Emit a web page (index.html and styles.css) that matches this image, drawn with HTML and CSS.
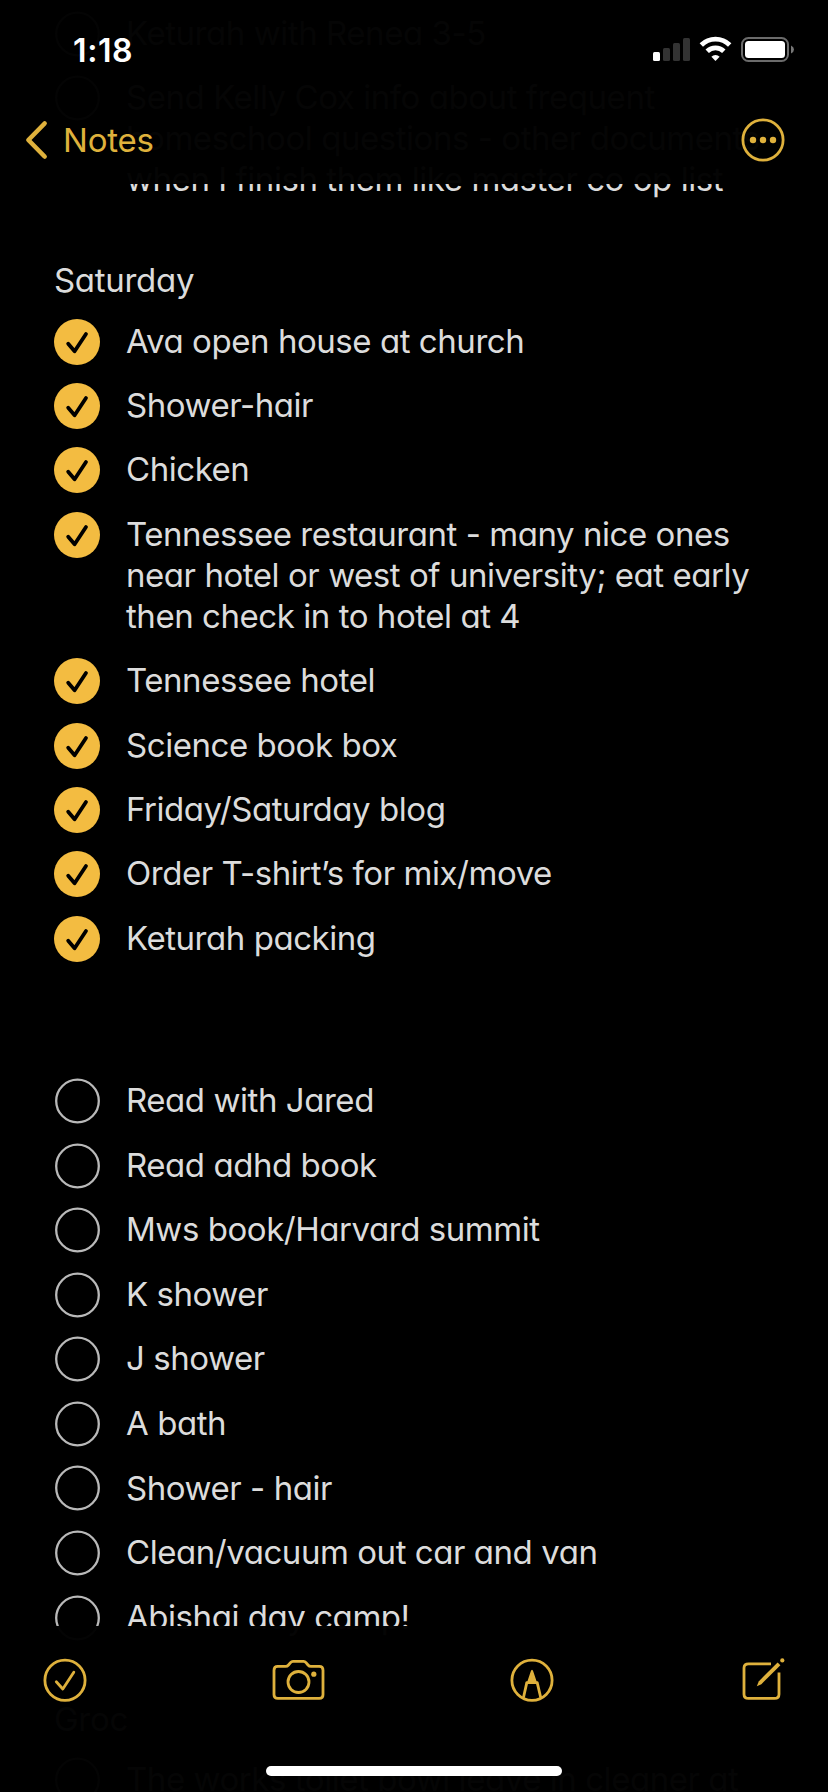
FILE: index.html
```html
<!DOCTYPE html>
<html lang="en">
<head>
<meta charset="utf-8">
<title>Notes</title>
<link rel="stylesheet" href="styles.css">
</head>
<body>
<svg class="defs" width="0" height="0">
  <symbol id="done" viewBox="0 0 46 46"><circle cx="23" cy="23" r="23" fill="#f3bc41"/><path d="M14.2 24.7 L20.6 32.2 L32 15" fill="none" stroke="#000" stroke-width="3.8" stroke-linecap="round" stroke-linejoin="round"/></symbol>
  <symbol id="open" viewBox="0 0 46 46"><circle cx="23.5" cy="23" r="21.3" fill="none" stroke="#b9b9b9" stroke-width="2.3"/></symbol>
</svg>
<div class="screen">
  <main class="note">
    <section class="group">
      <div class="item"><svg class="mark"><use href="#open"/></svg><p class="text">Keturah with Renea 3-5</p></div>
      <div class="item"><svg class="mark"><use href="#open"/></svg><p class="text">Send Kelly Cox info about frequent<br>homeschool questions - other documents<br>when I finish them like master co op list</p></div>
    </section>
    <h2 class="heading saturday">Saturday</h2>
    <section class="group finished">
      <div class="item"><svg class="mark"><use href="#done"/></svg><p class="text">Ava open house at church</p></div>
      <div class="item"><svg class="mark"><use href="#done"/></svg><p class="text">Shower-hair</p></div>
      <div class="item"><svg class="mark"><use href="#done"/></svg><p class="text">Chicken</p></div>
      <div class="item"><svg class="mark"><use href="#done"/></svg><p class="text">Tennessee restaurant - many nice ones<br>near hotel or west of university; eat early<br>then check in to hotel at 4</p></div>
      <div class="item"><svg class="mark"><use href="#done"/></svg><p class="text">Tennessee hotel</p></div>
      <div class="item"><svg class="mark"><use href="#done"/></svg><p class="text">Science book box</p></div>
      <div class="item"><svg class="mark"><use href="#done"/></svg><p class="text">Friday/Saturday blog</p></div>
      <div class="item"><svg class="mark"><use href="#done"/></svg><p class="text">Order T-shirt’s for mix/move</p></div>
      <div class="item"><svg class="mark"><use href="#done"/></svg><p class="text">Keturah packing</p></div>
    </section>
    <section class="group pending">
      <div class="item"><svg class="mark"><use href="#open"/></svg><p class="text">Read with Jared</p></div>
      <div class="item"><svg class="mark"><use href="#open"/></svg><p class="text">Read adhd book</p></div>
      <div class="item"><svg class="mark"><use href="#open"/></svg><p class="text">Mws book/Harvard summit</p></div>
      <div class="item"><svg class="mark"><use href="#open"/></svg><p class="text">K shower</p></div>
      <div class="item"><svg class="mark"><use href="#open"/></svg><p class="text">J shower</p></div>
      <div class="item"><svg class="mark"><use href="#open"/></svg><p class="text">A bath</p></div>
      <div class="item"><svg class="mark"><use href="#open"/></svg><p class="text">Shower - hair</p></div>
      <div class="item"><svg class="mark"><use href="#open"/></svg><p class="text">Clean/vacuum out car and van</p></div>
      <div class="item"><svg class="mark"><use href="#open"/></svg><p class="text">Abishai day camp!</p></div>
    </section>
    <h2 class="heading groceries">Groc</h2>
    <section class="group">
      <div class="item"><svg class="mark"><use href="#open"/></svg><p class="text">The works toilet bowl leave in cleaner at</p></div>
    </section>
  </main>

  <header class="topbar">
    <div class="status">
      <span class="time">1:18</span>
      <svg class="indicators" width="142" height="28" viewBox="0 0 142 28">
        <rect x="0" y="16" width="7" height="9" rx="1.5" fill="#fff"/>
        <g fill="#333"><rect x="10" y="12" width="7" height="13" rx="1.5"/><rect x="20" y="7" width="7" height="18" rx="1.5"/><rect x="30" y="2" width="7" height="23" rx="1.5"/></g>
        <g fill="none" stroke="#fff" stroke-width="4.8"><path d="M48.3 9 A20.2 20.2 0 0 1 76.7 9"/><path d="M54.2 15.2 A11.8 11.8 0 0 1 70.8 15.2"/></g>
        <path d="M62.5 25 L58.4 20.8 A5.8 5.8 0 0 1 66.6 20.8 Z" fill="#fff"/>
        <rect x="89" y="2" width="46" height="23" rx="6.5" fill="none" stroke="#6b6b6b" stroke-width="2"/>
        <rect x="92" y="5" width="40" height="17" rx="3.5" fill="#fff"/>
        <path d="M138 9.5 Q141 11 141 13.5 T138 17.5 Z" fill="#777"/>
      </svg>
    </div>
    <div class="nav">
      <div class="back">
        <svg width="24" height="40" viewBox="0 0 24 40"><path d="M20.6 3.5 L4.4 20 L20.6 36.5" fill="none" stroke="#dfb13c" stroke-width="4.6" stroke-linecap="round" stroke-linejoin="round"/></svg>
        <span class="back-label">Notes</span>
      </div>
      <svg width="44" height="44" viewBox="0 0 44 44"><circle cx="22" cy="22" r="20.1" fill="none" stroke="#dfb13c" stroke-width="2.8"/><g fill="#dfb13c"><circle cx="12" cy="22" r="3.2"/><circle cx="22" cy="22" r="3.2"/><circle cx="32" cy="22" r="3.2"/></g></svg>
    </div>
  </header>

  <footer class="toolbar">
    <div class="tools">
      <svg width="44" height="44" viewBox="0 0 44 44"><g class="line"><circle cx="22" cy="22.3" r="20.1"/><path d="M13.3 23.8 L19.8 31 L30.8 14.2"/></g></svg>
      <svg width="54" height="44" viewBox="0 0 54 44"><g class="line"><path d="M5.8 8.4 H13.5 Q15.3 8.4 16.5 7 L18.5 4.6 Q19.5 3.4 21 3.4 H31.5 Q33 3.4 34 4.6 L36 7 Q37.2 8.4 39 8.4 H47.3 Q51 8.4 51 12.2 V36.8 Q51 40.4 47.3 40.4 H5.8 Q2 40.4 2 36.8 V12.2 Q2 8.4 5.8 8.4 Z"/><circle cx="26.5" cy="24" r="10.5"/></g><circle cx="41.8" cy="16.2" r="2.6" fill="#dfb13c"/></svg>
      <svg class="pen" width="44" height="44" viewBox="0 0 44 44"><g class="line"><circle cx="22" cy="22.3" r="20.1"/><path d="M13.6 39 L16.8 24.6 H27.2 L30.6 39"/></g><path d="M22 11.7 Q22.8 11.7 23.2 13.2 L27.3 25.5 H16.7 L20.8 13.2 Q21.2 11.7 22 11.7 Z" fill="#dfb13c"/></svg>
      <svg width="44" height="44" viewBox="0 0 44 44"><g class="line"><path class="butt" d="M30 5.8 H7.5 Q3 5.8 3 10 V36.2 Q3 40.4 7.5 40.4 H33.5 Q38 40.4 38 36.2 V14.5"/></g><path d="M36.6 4.4 L39.4 7.2 L20.4 26.2 L15.8 28.2 L17.7 23.4 Z" fill="#dfb13c"/><circle cx="41.3" cy="2.4" r="2.1" fill="#dfb13c"/></svg>
    </div>
    <div class="home"></div>
  </footer>
</div>
</body>
</html>
```
FILE: styles.css
```css
body {
  margin: 0;
  background: #000;
}

.defs {
  display: block;
}

.screen {
  position: relative;
  width: 828px;
  height: 1792px;
  overflow: hidden;
  background: #000;
  color: #dcdcdc;
  font-family: Inter, "Liberation Sans", sans-serif;
}

.note {
  padding: 12.8px 20px 0 54px;
}

.group {
  display: flex;
  flex-direction: column;
  gap: 23.6px;
}

.finished {
  gap: 23.4px;
}

.pending {
  margin-top: 121.2px;
}

.item {
  display: flex;
  gap: 26px;
  align-items: flex-start;
}

.mark {
  flex: none;
  width: 46px;
  height: 46px;
  margin: -2.1px 0 -10px;
}

.text,
.heading {
  margin: 0;
  font-size: 33px;
  font-weight: 400;
  line-height: 41px;
  letter-spacing: -0.45px;
  white-space: nowrap;
  font-feature-settings: "cv11" 1;
}

.heading {
  letter-spacing: -0.3px;
}

.saturday {
  margin: 59.5px 0 19.8px;
}

.groceries {
  margin: 60.8px 0 19.4px;
}

.topbar,
.toolbar {
  position: absolute;
  left: 0;
  width: 100%;
  box-sizing: border-box;
  background: rgba(0, 0, 0, 0.98);
}

.topbar {
  top: 0;
  height: 184px;
}

.status {
  display: flex;
  justify-content: space-between;
  align-items: flex-start;
  height: 96px;
  padding: 36px 33px 0 73px;
  box-sizing: border-box;
  color: #fff;
}

.time {
  padding-top: 1px;
  font-size: 32px;
  font-weight: 600;
  line-height: 28px;
  letter-spacing: 0.6px;
}

.nav {
  display: flex;
  justify-content: space-between;
  align-items: center;
  height: 88px;
  padding: 0 43px 0 24px;
}

.back {
  display: flex;
  align-items: center;
  gap: 15px;
}

.back-label {
  font-size: 33px;
  line-height: 40px;
  letter-spacing: -0.2px;
  color: #dfb13c;
}

.toolbar {
  top: 1626px;
  height: 166px;
  padding-top: 32px;
}

.tools {
  display: flex;
  justify-content: space-between;
  padding: 0 42.6px 0 42.5px;
}

.pen {
  margin: 0 1.8px 0 -1.8px;
}

.line {
  fill: none;
  stroke: #dfb13c;
  stroke-width: 2.8;
  stroke-linecap: round;
  stroke-linejoin: round;
}

.butt {
  stroke-linecap: butt;
}

.home {
  width: 296px;
  height: 10px;
  margin: 64px auto 0;
  border-radius: 5px;
  background: #fff;
}
```
